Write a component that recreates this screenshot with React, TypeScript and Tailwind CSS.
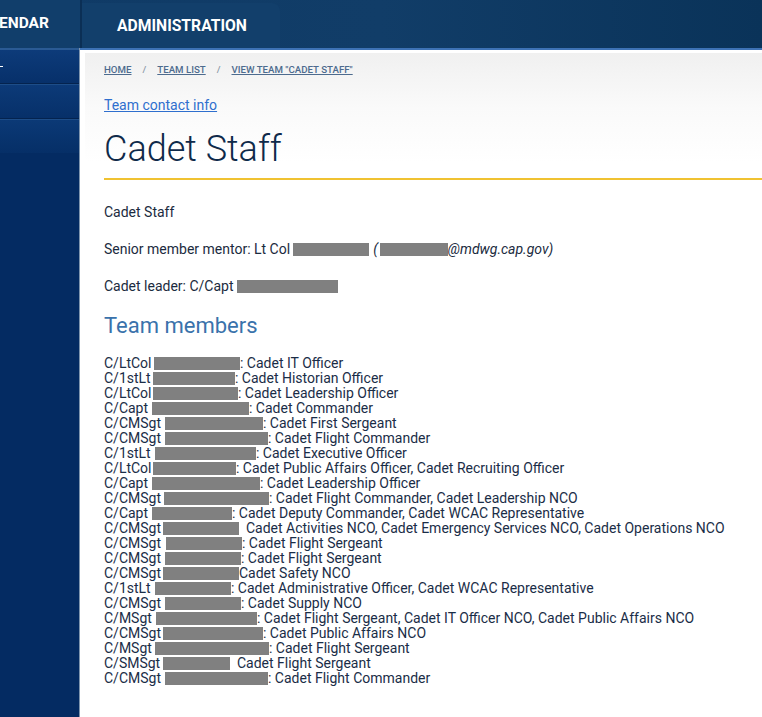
import React from "react";

type Member = { rank: string; start: number; end: number; role: string };

// x positions of each redaction bar, measured from the left of the page
const members: Member[] = [
  { rank: "C/LtCol", start: 154, end: 240, role: ": Cadet IT Officer" },
  { rank: "C/1stLt", start: 153, end: 235, role: ": Cadet Historian Officer" },
  { rank: "C/LtCol", start: 153, end: 238, role: ": Cadet Leadership Officer" },
  { rank: "C/Capt", start: 152, end: 249, role: ": Cadet Commander" },
  { rank: "C/CMSgt", start: 165, end: 263, role: ": Cadet First Sergeant" },
  { rank: "C/CMSgt", start: 165, end: 268, role: ": Cadet Flight Commander" },
  { rank: "C/1stLt", start: 155, end: 256, role: ": Cadet Executive Officer" },
  { rank: "C/LtCol", start: 153, end: 236, role: ": Cadet Public Affairs Officer, Cadet Recruiting Officer" },
  { rank: "C/Capt", start: 152, end: 260, role: ": Cadet Leadership Officer" },
  { rank: "C/CMSgt", start: 164, end: 269, role: ": Cadet Flight Commander, Cadet Leadership NCO" },
  { rank: "C/Capt", start: 152, end: 232, role: ": Cadet Deputy Commander, Cadet WCAC Representative" },
  { rank: "C/CMSgt", start: 163, end: 239, role: "\u00a0 Cadet Activities NCO, Cadet Emergency Services NCO, Cadet Operations NCO" },
  { rank: "C/CMSgt", start: 166, end: 242, role: ": Cadet Flight Sergeant" },
  { rank: "C/CMSgt", start: 165, end: 241, role: ": Cadet Flight Sergeant" },
  { rank: "C/CMSgt", start: 163, end: 239, role: "Cadet Safety NCO" },
  { rank: "C/1stLt", start: 155, end: 231, role: ": Cadet Administrative Officer, Cadet WCAC Representative" },
  { rank: "C/CMSgt", start: 165, end: 241, role: ": Cadet Supply NCO" },
  { rank: "C/MSgt", start: 156, end: 257, role: ": Cadet Flight Sergeant, Cadet IT Officer NCO, Cadet Public Affairs NCO" },
  { rank: "C/CMSgt", start: 163, end: 263, role: ": Cadet Public Affairs NCO" },
  { rank: "C/MSgt", start: 155, end: 269, role: ": Cadet Flight Sergeant" },
  { rank: "C/SMSgt", start: 163, end: 230, role: "\u00a0 Cadet Flight Sergeant" },
  { rank: "C/CMSgt", start: 165, end: 268, role: ": Cadet Flight Commander" },
];

const LEFT = 104;

function Bar({ w, className = "" }: { w: number; className?: string }) {
  return <span className={`inline-block h-[13px] bg-[#808080] align-[-2px] ${className}`} style={{ width: w }} />;
}

export default function App() {
  return (
    <div className="h-[717px] w-[762px] overflow-hidden bg-white font-['Roboto',sans-serif] flex flex-col">
      {/* top nav */}
      <div className="h-[48px] flex bg-gradient-to-r from-[#0f3a66] via-[#113d68] to-[#0a3359] shrink-0">
        <div className="w-[80px] flex items-center bg-[#113e6b] text-white font-bold text-[15.5px] overflow-hidden">
          <span className="-ml-[1px]">ENDAR</span>
        </div>
        <div className="w-[2px] bg-[#0b2f55]" />
        <div className="mt-[3px] w-[198px] rounded-tr-[8px] bg-[#123f6b] flex items-center pl-[35px] text-white font-bold text-[15.7px]">
          ADMINISTRATION
        </div>
      </div>

      <div className="flex flex-1 min-h-0">
        {/* sidebar */}
        <div className="w-[80px] shrink-0 flex flex-col bg-[#042b62] border-r border-[#7f95ae]">
          <div className="h-[36px] bg-gradient-to-b from-[#0d3b7a] to-[#07306a] border-t-2 border-[#2a5a94] border-b border-b-[#04234f] flex items-center">
            <span className="w-[3px] h-[1px] bg-white" />
          </div>
          <div className="h-[35px] bg-gradient-to-b from-[#0c3a78] to-[#073069] border-t border-[#1d4d88] border-b border-b-[#04234f]" />
          <div className="h-[34px] bg-gradient-to-b from-[#0b3976] to-[#062f67] border-t border-[#1d4d88]" />
        </div>

        {/* main */}
        <div className="flex-1 flex flex-col min-w-0">
          <div className="h-[2px] bg-[#3d72b5]" />
          <div className="flex-1 pl-[5px] pt-[3px] bg-white">
            <div className="h-full bg-gradient-to-b from-[#f0f0f0] via-[#fafafa] to-white bg-no-repeat [background-size:100%_110px] pl-[19px] pt-[11px] text-[#1b2b40]">
              {/* breadcrumb */}
              <div className="flex items-center text-[9.7px] font-medium text-[#4d6b8e] h-[12px]">
                <span className="underline">HOME</span>
                <span className="mx-[11px] text-[#8a97a6]">/</span>
                <span className="underline">TEAM LIST</span>
                <span className="mx-[11px] text-[#8a97a6]">/</span>
                <span className="underline">VIEW TEAM "CADET STAFF"</span>
              </div>

              <div className="mt-[20px] text-[14px] leading-[18px] text-[#2f6fce] underline">Team contact info</div>

              <h1 className="mt-[14px] text-[36px] leading-[42px] font-light text-[#0f2a4a]">Cadet Staff</h1>

              <div className="mt-[8px] h-[2px] bg-[#f0c231] -mr-[10px]" />

              <div className="mt-[24px] text-[14px] leading-[16px]">Cadet Staff</div>

              <div className="mt-[21px] text-[14px] leading-[16px] flex items-center">
                <span>Senior member mentor: Lt Col</span>
                <Bar w={76} className="ml-[3px]" />
                <span className="italic ml-[4px]">(</span>
                <Bar w={68} className="ml-[2px]" />
                <span className="italic">@mdwg.cap.gov)</span>
              </div>

              <div className="mt-[21px] text-[14px] leading-[16px] flex items-center">
                <span>Cadet leader: C/Capt</span>
                <Bar w={101} className="ml-[3px]" />
              </div>

              <h2 className="mt-[18px] text-[22px] leading-[28px] text-[#3a72ab]">Team members</h2>

              <div className="mt-[16px] text-[14px] leading-[15px] text-[#1a2d47]">
                {members.map((m, i) => (
                  <div key={i} className="flex items-center h-[15px] whitespace-nowrap">
                    <span className="inline-block shrink-0" style={{ width: m.start - LEFT }}>
                      {m.rank}
                    </span>
                    <Bar w={m.end - m.start} />
                    <span>{m.role}</span>
                  </div>
                ))}
              </div>
            </div>
          </div>
        </div>
      </div>
    </div>
  );
}
